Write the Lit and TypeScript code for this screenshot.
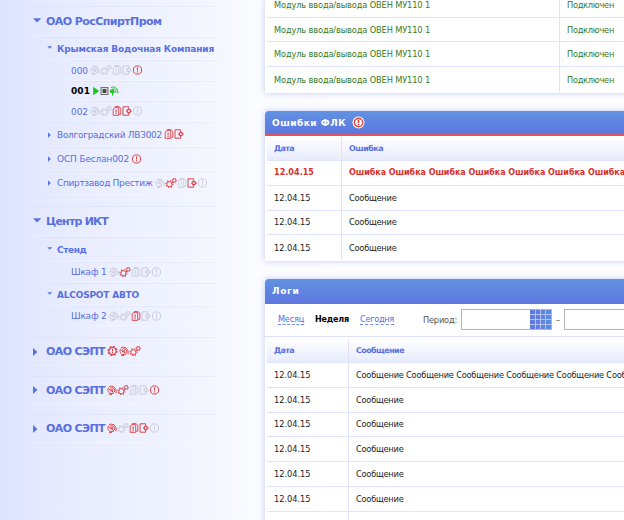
import { LitElement, html, css, svg, nothing } from "lit";
import { customElement, property } from "lit/decorators.js";

type IconName = "dish" | "gears" | "doc" | "door" | "alert" | "gear" | "play" | "stop" | "antenna";
type Icon = [IconName, ("off" | "bad" | "ok")?];
interface Node {
  level: 1 | 2 | 3;
  text: string;
  width: number;
  h: number;
  gap?: number;
  open?: boolean;
  bold?: boolean;
  active?: boolean;
  icons?: Icon[];
}

const set = (bad: string): Icon[] =>
  (["dish", "gears", "doc", "door", "alert"] as IconName[]).map((n) => [n, bad.split(" ").includes(n) ? "bad" : "off"]);

const tree: Node[] = [
  { level: 1, text: "ОАО РосСпиртПром", width: 115.5, h: 30, open: true, bold: true },
  { level: 2, text: "Крымская Водочная Компания", width: 157, h: 23, gap: 1, open: true, bold: true },
  { level: 3, text: "000", width: 17, h: 21, icons: set("alert") },
  { level: 3, text: "001", width: 19, h: 20, active: true, icons: [["play", "ok"], ["stop"], ["antenna", "ok"]] },
  { level: 3, text: "002", width: 17, h: 21, icons: set("doc door") },
  { level: 2, text: "Волгоградский ЛВЗ002", width: 105, h: 25, icons: [["doc", "bad"], ["door", "bad"]] },
  { level: 2, text: "ОСП Беслан002", width: 72, h: 24, icons: [["alert", "bad"]] },
  { level: 2, text: "Спиртзавод Престиж", width: 95.5, h: 24, icons: set("gears door") },
  { level: 1, text: "Центр ИКТ", width: 62, h: 30, gap: 11, open: true, bold: true },
  { level: 2, text: "Стенд", width: 29.5, h: 25, gap: 1, open: true, bold: true },
  { level: 3, text: "Шкаф 1", width: 35.5, h: 20, icons: set("gears") },
  { level: 2, text: "ALCOSPOT АВТО", width: 82, h: 23, gap: 1, open: true, bold: true },
  { level: 3, text: "Шкаф 2", width: 35.5, h: 20, icons: set("doc") },
  { level: 1, text: "ОАО СЭПТ", width: 59, h: 29, gap: 11, bold: true, icons: [["gear", "bad"], ["dish", "bad"], ["gears", "bad"]] },
  { level: 1, text: "ОАО СЭПТ", width: 59, h: 29, gap: 9.5, bold: true, icons: set("dish gears alert") },
  { level: 1, text: "ОАО СЭПТ", width: 59, h: 29, gap: 9.5, bold: true, icons: set("dish doc door") },
];

const glyphs: Record<IconName, [number, unknown]> = {
  dish: [10, svg`<g fill="none" stroke="currentColor" stroke-width="1">
    <path d="M1.2 3.4C.2 6 2 8.8 5 8.6C6 8.5 6.6 8.2 7 7.7Z"/>
    <path d="M3.4 5.4L5.6 4.2M4.8 6.6L5.9 4.4"/><path d="M1.8 1.9C5.6-.4 10.2 3 9 8.3M3.2 3.1C6.2 1.8 8.6 4.4 7.5 7M2 9.4H5"/></g>`],
  gears: [12, svg`<g fill="none" stroke="currentColor"><circle cx="4.4" cy="6.2" r="2.6" stroke-width="1"/>
    <circle cx="4.4" cy="6.2" r="3.5" stroke-width="1.1" stroke-dasharray="1.2 1.55"/>
    <circle cx="9.2" cy="2.4" r="1.7" stroke-width="1"/><circle cx="9.2" cy="2.4" r="2.4" stroke-width=".7" stroke-dasharray=".9 .98"/></g>`],
  doc: [10, svg`<g fill="none" stroke="currentColor" stroke-width=".9"><path d="M1.2 3L3 1.6H6.7V9.4H1.2Z"/>
    <path d="M3.3 1.5V.5H6.8L8.8 2.2V8.2H7"/><path d="M4.1 3.5V6.4M4.1 7.1V8.2" stroke-width="1.1"/></g>`],
  door: [10, svg`<g fill="none" stroke="currentColor" stroke-width="1"><path d="M6.6 2.4V.8H1V9.2H6.6V7.8"/>
    <circle cx="6.8" cy="5.1" r="1.7" stroke-width="1.2"/><path d="M6.8 2.4V3.4M6.8 6.8V8M4.1 5.1H5M8.5 5.1H9.8"/></g>`],
  alert: [11, svg`<circle cx="5.5" cy="5" r="4.1" fill="none" stroke="currentColor" stroke-width="1"/>
    <path d="M5.5 2.5V5.6M5.5 6.3V7.4" stroke="currentColor" stroke-width="1.1"/>`],
  gear: [12, svg`<g fill="none" stroke="currentColor"><circle cx="5.5" cy="5" r="3.6" stroke-width="1.2"/>
    <circle cx="5.5" cy="5" r="4.5" stroke-width="1.2" stroke-dasharray="1.8 1.73"/>
    <path d="M5.5 2.8V5.4M5.5 6V7.1" stroke-width="1.1"/></g>`],
  play: [8, svg`<path d="M1.2 .8L7.2 5L1.2 9.2Z" fill="currentColor"/>`],
  stop: [9, svg`<rect x="1" y="1.5" width="7" height="7" fill="#ddd" stroke="#666" stroke-width=".9"/><rect x="2.6" y="3.1" width="3.8" height="3.8" fill="#444"/>`],
  antenna: [10, svg`<path d="M.9 6.5C.6 4.2 2 2.6 4.2 3L6 6.5L4.3 7V9.6H3V7Z" fill="currentColor"/>
    <g fill="none" stroke="currentColor" stroke-width="1"><path d="M2 1.6C5.4-.3 9.4 2.7 8.8 7.2M3.6 3C6 2.6 7.5 4.4 6.9 7"/></g>`],
};

const icon = (n: IconName, tone = "") => svg`<svg class="icon ${tone}" width=${glyphs[n][0]} height="10" viewBox="0 0 ${glyphs[n][0]} 10">${glyphs[n][1]}</svg>`;

/** One line of text set to an exact measure by adjusting its tracking. */
@customElement("fit-text")
class FitText extends LitElement {
  @property({ type: Number }) width = 0;
  @property() text = "";
  static styles = css`
    :host { display: inline-block; white-space: pre; flex: none; }
    span { display: inline-block; }
  `;
  render() { return html`<span>${this.text}</span>`; }
  updated() {
    const el = this.renderRoot.querySelector("span")!;
    el.style.letterSpacing = "0";
    const natural = el.getBoundingClientRect().width;
    el.style.letterSpacing = `${(this.width - natural) / this.text.length}px`;
  }
}

const t = (text: string, width: number) => html`<fit-text .text=${text} .width=${width}></fit-text>`;

@customElement("app-root")
class AppRoot extends LitElement {
  static styles = css`
    :host {
      display: grid; grid-template-columns: 265px 1fr; width: 624px; height: 520px; overflow: hidden;
      font: 8.25px "DejaVu Sans", Verdana, sans-serif; color: #1c1c1c;
      background: linear-gradient(90deg, #dfe4ff 0, #e8ecff 70px, #eff2ff 160px, #f5f7ff 215px, #fbfcff 260px, #fdfdff 330px);
    }
    * { box-sizing: border-box; }
    nav { padding: 6px 0 0 33px; color: #586fe0; font-size: 9px; }
    .node { display: flex; align-items: center; width: 182px; border-top: 1px solid rgba(205, 215, 248, .3); border-bottom: 1px solid rgba(255, 255, 255, .35); }
    .l1 { font-size: 11px; }
    .l2 { margin-left: 14px; width: 168px; }
    .l3 { margin-left: 38px; width: 144px; }
    .bold { font-weight: bold; }
    .active { font-weight: bold; color: #000; }
    .mark { flex: none; width: 13px; height: 8px; }
    .l2 .mark { width: 10px; }
    .icons { display: flex; margin: 0 0 1px 2px; }
    .icon { display: block; flex: none; }
    .off { color: #cbccda; }
    .bad { color: #df4247; }
    .ok { color: #1fc41a; }

    main { display: flex; flex-direction: column; min-width: 0; }
    .panel { width: 380px; background: #fff; box-shadow: 0 0 6px rgba(150, 170, 240, .6); flex: none; }
    .devices { height: 92.5px; margin-bottom: 18.5px; }
    .errors { height: 150px; margin-bottom: 18px; border-radius: 4px 4px 0 0; }
    .logs { height: 260px; border-radius: 4px 4px 0 0; }
    .title { display: flex; align-items: center; height: 24.5px; padding-left: 7px; border-radius: 4px 4px 0 0;
      background: linear-gradient(#6192e2, #5f76df); color: #fff; font-weight: bold; font-size: 9px; }
    .errors .title { height: 25px; border-bottom: 2px solid #e05663; }
    .warn { margin-left: 6px; }
    .table { padding-left: 2px; }
    .row { display: grid; height: 24.8px; border-bottom: 1px solid #dfe4fc; }
    .row:last-child { border-bottom: 0; }
    .cell { display: flex; align-items: center; padding-left: 7px; overflow: hidden; }
    .cell + .cell { border-left: 1px solid #dfe2fa; }
    .devices .row { grid-template-columns: 292px 1fr; color: #37791d; }
    .devices .row:first-child { height: 17.7px; }
    .devices .row:first-child .cell { align-items: flex-start; line-height: 10px; }
    .errors .row { grid-template-columns: 74px 1fr; }
    .errors .table { padding-top: 1px; }
    .logs .row { grid-template-columns: 81px 1fr; }
    .logs .table { padding-top: 1.5px; border-top: 1px solid #dce2fa; }
    .row.head { height: 24px; background: linear-gradient(#fff, #e7ebfd); color: #586fe0; font-weight: bold; font-size: 7.9px; }
    .logs .row.head { height: 24.5px; }
    .row.fail { color: #d9302c; font-weight: bold; font-size: 8px; }
    .tools { display: flex; align-items: center; height: 32.5px; padding-left: 13px; }
    .link { color: #586fe0; border-bottom: 1px dashed #7186e6; line-height: 9px; }
    .week { margin: 0 11px; font-weight: bold; font-size: 8px; color: #000; }
    .period { margin: 0 4px 0 29px; color: #555; }
    .field { flex: none; display: flex; justify-content: flex-end; width: 91px; height: 21px; border: 1px solid #b5b5b5; background: #fff; }
    .dash { flex: none; width: 12px; text-align: center; color: #555; }
    .cal { display: block; flex: none; }
  `;

  private mark(n: Node) {
    if (n.level === 3) return nothing;
    const d = n.level === 1
      ? n.open ? "M0 1.2H8.2L4.1 5.6Z" : "M0 0V8L4.4 4Z"
      : n.open ? "M.3 1.2H5.2L2.7 3.8Z" : "M1 1.2V6.8L3.8 4Z";
    return html`<svg class="mark" viewBox=${n.level === 1 ? "0 0 13 8" : "0 0 10 8"}>${svg`<path d=${d} fill="#5474e0"/>`}</svg>`;
  }

  private node(n: Node) {
    return html`<div class="node l${n.level} ${n.bold ? "bold" : ""} ${n.active ? "active" : ""}" style="height:${n.h}px;margin-top:${n.gap ?? 0}px">
      ${this.mark(n)}${t(n.text, n.width)}
      ${n.icons ? html`<span class="icons">${n.icons.map(([i, tone]) => icon(i, tone))}</span>` : nothing}
    </div>`;
  }

  private row(a: unknown, b: unknown, kind = "") {
    return html`<div class="row ${kind}"><div class="cell">${a}</div><div class="cell">${b}</div></div>`;
  }

  render() {
    const date = () => t("12.04.15", 36.5);
    const message = () => t("Сообщение", 47.5);
    return html`
      <nav>${tree.map((n) => this.node(n))}</nav>
      <main>
        <section class="panel devices"><div class="table">
          ${[0, 1, 2, 3].map(() => this.row(t("Модуль ввода/вывода ОВЕН МУ110 1", 156), t("Подключен", 47)))}
        </div></section>
        <section class="panel errors">
          <div class="title">${t("Ошибки ФЛК", 74)}
            <svg class="warn" width="13" height="13" viewBox="0 0 13 13">
              <circle cx="6.5" cy="6.5" r="6" fill="#fff"/><circle cx="6.5" cy="6.5" r="4.2" fill="#fff" stroke="#df4b3d" stroke-width="1.4"/>
              <path d="M6.5 3.6V7.1M6.5 7.9V9.3" stroke="#df3a2e" stroke-width="1.5"/>
            </svg>
          </div>
          <div class="table">
            ${this.row(t("Дата", 20), t("Ошибка", 34), "head")}
            ${this.row(t("12.04.15", 40), t(Array(7).fill("Ошибка").join(" "), 276), "fail")}
            ${[0, 1, 2].map(() => this.row(date(), message()))}
          </div>
        </section>
        <section class="panel logs">
          <div class="title">${t("Логи", 27.5)}</div>
          <div class="tools">
            <span class="link">${t("Месяц", 26)}</span><span class="week">${t("Неделя", 34)}</span><span class="link">${t("Сегодня", 34)}</span>
            <span class="period">${t("Период:", 34)}</span>
            <span class="field"><svg class="cal" width="21" height="19" viewBox="0 0 21 19">
              <defs><linearGradient id="c"><stop stop-color="#6076df"/><stop offset="1" stop-color="#5c8de0"/></linearGradient></defs>
              <rect width="21" height="19" fill="url(#c)"/>
              <path d="M5.5 0V19M10.5 0V19M15.5 0V19M0 4.5H21M0 9.5H21M0 14.5H21" stroke="#b4c1f2" stroke-width="1"/>
            </svg></span>
            <span class="dash">–</span><span class="field"></span>
          </div>
          <div class="table">
            ${this.row(t("Дата", 20), t("Сообщение", 48), "head")}
            ${this.row(date(), t(Array(6).fill("Сообщение").join(" "), 298))}
            ${[0, 1, 2, 3, 4].map(() => this.row(date(), message()))}
            ${this.row(nothing, nothing)}
          </div>
        </section>
      </main>`;
  }
}
